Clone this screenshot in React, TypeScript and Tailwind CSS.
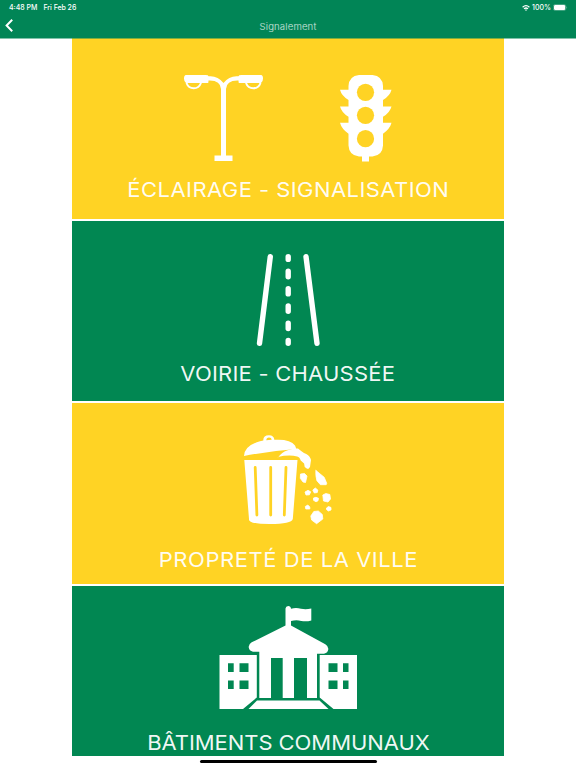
import React from 'react';

type CardProps = {
  label: string;
  className: string;
  labelClassName: string;
  viewBox: string;
  children: React.ReactNode;
};

const Card: React.FC<CardProps> = ({ label, className, labelClassName, viewBox, children }) => (
  <div className={`w-[432px] overflow-hidden flex flex-col items-center shrink-0 ${className}`}>
    <svg viewBox={viewBox} className="w-[432px] h-[142px] shrink-0" fill="#fff">
      {children}
    </svg>
    <div className={`text-white/95 font-normal text-[20px] leading-[20px] whitespace-nowrap scale-x-110 ${labelClassName}`}>
      {label}
    </div>
  </div>
);

const StatusBar: React.FC = () => (
  <div className="h-[15px] pt-px pl-[9px] pr-[8px] flex items-center justify-between text-white text-[7px] leading-[14px] font-medium">
    <div className="flex gap-[6px]">
      <span>4:48 PM</span>
      <span className="tracking-[-0.05px]">Fri Feb 26</span>
    </div>
    <div className="flex items-center">
      <svg viewBox="0 0 8 6" className="w-[8px] h-[6px] mr-[2px]" fill="none" stroke="#fff" strokeWidth="1.2">
        <path d="M.6 2.3Q4-.9 7.4 2.3M2 3.9Q4 2.1 6 3.9" />
        <path d="M4 6 2.9 4.8Q4 4 5.1 4.8Z" fill="#fff" stroke="none" />
      </svg>
      <span>100%</span>
      <svg viewBox="0 0 15 7" className="w-[15px] h-[7px] ml-[2px] -mt-px">
        <rect x=".3" y=".5" width="12.6" height="6" rx="1.8" fill="none" stroke="#fff" strokeOpacity=".5" strokeWidth=".5" />
        <rect x="1" y="1.1" width="11.2" height="4.8" rx="1.2" fill="#fff" />
        <path d="M13.6 2.5q1 1 0 2z" fill="#fff" fillOpacity=".6" />
      </svg>
    </div>
  </div>
);

const App: React.FC = () => {
  return (
    <div className="w-[576px] h-[768px] bg-white overflow-hidden flex flex-col font-['Inter',sans-serif]">
      <header className="relative z-10 h-[38px] shrink-0 bg-[#018556] shadow-[0_1px_0_rgba(1,133,86,0.5)]">
        <StatusBar />
        <div className="h-[23px] grid grid-cols-3 items-center">
          <svg viewBox="0 0 8 13" className="w-[8px] h-[13px] ml-[5px] -mt-[3px]" fill="none" stroke="#fff" strokeWidth="2">
            <path d="M7.2 .8 1.6 6.5 7.2 12.2" />
          </svg>
          <h1 className="text-center text-[9.6px] leading-[23px] font-light tracking-[0.15px] text-white/80">Signalement</h1>
        </div>
      </header>

      <main className="flex flex-col items-center h-[718px] shrink-0 overflow-hidden">
        <Card
          label="ÉCLAIRAGE - SIGNALISATION"
          className="bg-[#ffd324] h-[181px] mb-[2px]"
          labelClassName="tracking-[0.4px]"
          viewBox="72 38 432 142"
        >
          <path d="M186 75h19.5q3 0 3 1.3 9-1 15 6.7 6-7.7 15-6.7 0-1.3 3-1.3H261q2 0 2 3.5t-2 4.5H239q-.5 0-.5-2.5-12-.5-12.5 8.500V155.500h6.500v5.500H214.500v-5.500h6.500V89q-.5-9-12.500-8.500 0 2.500-.5 2.500H186q-2-1-2-4.500T186 75z" />
          <path d="M186.500 83q2 5.300 7.200 5.300T201 83M246 83q2 5.300 7.300 5.300T260.500 83" fill="none" stroke="#fff" strokeWidth="2" />
          <path d="M359 75h13.500q10 1 10.500 11v3.700h8.500q-1.500 6-8.500 10.300v6.500h8.500q-1.500 6-8.500 10.300v6h8.500q-1.500 6-8.500 11v11.700q-.5 10-10.500 11H369v5h-7v-5h-3q-10-1-10.500-11v-11.700q-7-5-8.500-11h8.500v-6q-7-4.300-8.500-10.300h8.500V100q-7-4.300-8.500-10.300h8.500V86q.5-10 10.500-11z" />
          <g fill="#ffd324">
            <circle cx="365.5" cy="92.3" r="8.6" />
            <circle cx="365.5" cy="115.3" r="8.6" />
            <circle cx="365.5" cy="138.7" r="8.6" />
          </g>
        </Card>

        <Card
          label="VOIRIE - CHAUSSÉE"
          className="bg-[#018752] h-[180px] mb-[2px]"
          labelClassName="tracking-[0.2px] mt-[1px]"
          viewBox="72 221 432 142"
        >
          <g fill="none" stroke="#fff" strokeWidth="5.4" strokeLinecap="round">
            <path d="M270.3 256.7 259.5 343.3M306 256.7 317 343.3" />
            <path d="M288.2 256.6v2.8M288.2 271.3v5.4M288.2 288.7v5.2M288.2 306v5.2M288.2 323.3v5.2M288.2 340.5v2.8" />
          </g>
        </Card>

        <Card
          label="PROPRETÉ DE LA VILLE"
          className="bg-[#ffd324] h-[181px] mb-[2px]"
          labelClassName="tracking-[0.5px] mt-[5px] translate-x-[0.5px]"
          viewBox="72 403 432 142"
        >
          <path d="M244 456q.5-10.500 16-14.700l3.300-.8q-.3-5.200 5.700-5.200 5 0 5.300 4.500 16-1 20.700 5.700.8 1.500 1.300 3.500Q270 451 244 456z" />
          <path d="M266.300 440.200q.2-2.700 2.700-2.700t2.700 2.300z" fill="#ffd324" />
          <path d="M244.300 460h53.200l-4.700 59q-1.300 5-23 5t-20.800-5z" />
          <path d="M255.200 467.500l1.700 47.500M270.700 467.500V515M286 467.500 284.300 515" fill="none" stroke="#ffd324" strokeWidth="2.8" strokeLinecap="round" />
          <path d="M278 457.500q4-5.500 9-7 6-2.300 11-2 3 2.500 6 4.500 5 1.500 6.500 5.500l.5 1.500-1 7-1.800 2-1.500-.5-2-1.500-.6-3.500-3.400-3q-1-3.500-3.500-4-8-2-19.500 .5z" />
          <path d="M315.700 470.300l8.500 7 2.500 6-.5 1.400h-5.800l-3.500-4q-1.500-5-1-10.400zM300.500 474l4-.5 2.500 2.500-1.500 6.500-2.500-.5-2.700-3.700zM305 492l3-1.700 2.700 1.500-1.300 3-3.400.2zM312.800 490l2.500-2 2.500 2-.5 2.500-3 .5zM313.500 498l2.500-.7 2.500 1-.5 2.500-2 1-2.500-1.500zM322.800 495l3-1.500 4 1 .7 4.500-2.500 3-4.500-1zM305.300 506.500l2.500-1.500 2 2v2h-4zM326.500 508l2-1.500 2.500 1v2.500l-2.700 1-1.800-1.500zM310.800 516l3-4.500 4.500-.5 4 3.500.5 4.500-6.200 4.700-5-3.700z" stroke="#fff" strokeWidth=".8" strokeLinejoin="round" />
        </Card>

        <Card
          label="BÂTIMENTS COMMUNAUX"
          className="bg-[#018752] h-[170px]"
          labelClassName="tracking-[-0.05px] mt-[5px]"
          viewBox="72 586 432 142"
        >
          <path d="M285.500 625.500V608.500q.3-2.500 2.700-2.500 2.500 0 2.800 2.700 5-1.200 10 0 5 1 10.300-.3v12q-5 1.500-10 .5-5-1.300-10.300.1v4.500l34.300 18.800q3.300 2 3 5-.3 3.500-4.300 4.500H317V698H307v-40H294v40H282.700v-40H271v40H259.300v-46.200H253q-4-1-4.300-4.500-.3-3 3-5z" />
          <path d="M219.500 655H256.800v42.500L243 709H219.500zM319.700 655H357v54H333.500L319.700 697.500z" />
          <path d="M257 700.500H319.500l9 8.500H248.500z" />
          <path fill="#018752" d="M228 663.300h5.700v8.700H228zM239.500 663.300h9v8.700h-9zM228 680.500h5.700v8.500H228zM239.500 680.500h9v8.500h-9zM328.500 663.300h9v8.700h-9zM343 663.300h5.500v8.700H343zM328.500 680.500h9v8.500h-9zM343 680.500h5.500v8.500H343z" />
        </Card>
      </main>

      <footer className="h-[12px] shrink-0 flex justify-center items-start pt-[4px]">
        <div className="w-[177px] h-[3px] rounded-full bg-black" />
      </footer>
    </div>
  );
};

export default App;
